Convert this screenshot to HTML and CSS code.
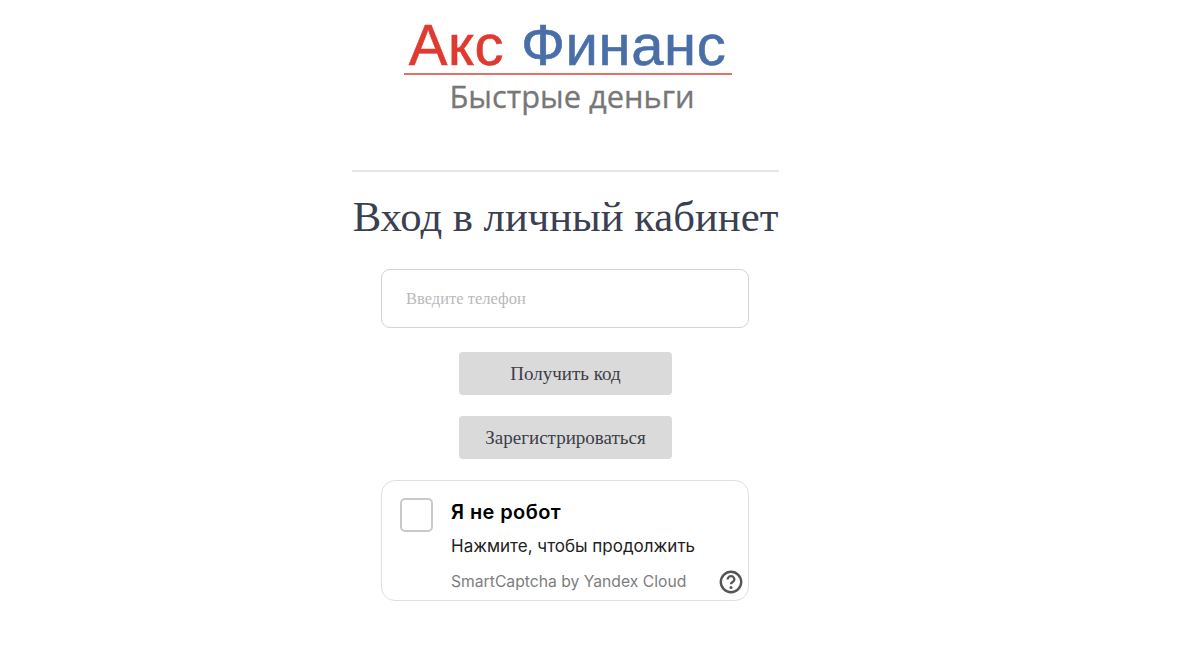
FILE: index.html
```html
<!DOCTYPE html>
<html lang="ru">
<head>
<meta charset="utf-8">
<title>Вход в личный кабинет</title>
<link rel="stylesheet" href="styles.css">
</head>
<body>
<main class="page">
  <div class="logo">
    <div class="logo-name"><span class="red">Акс</span> <span class="blue">Финанс</span></div>
    <div class="logo-line"></div>
    <div class="logo-sub">Быстрые деньги</div>
  </div>
  <section class="panel">
    <h1 class="title">Вход в личный кабинет</h1>
    <form class="form">
      <input class="phone" type="text" placeholder="Введите телефон">
      <button class="btn" type="button">Получить код</button>
      <button class="btn" type="button">Зарегистрироваться</button>
      <div class="captcha">
        <span class="check"></span>
        <div class="captcha-body">
          <div class="captcha-title">Я не робот</div>
          <div class="captcha-text">Нажмите, чтобы продолжить</div>
          <div class="captcha-foot">
            <span>SmartCaptcha by Yandex Cloud</span>
            <svg class="help" viewBox="0 0 24 24" width="24" height="24" aria-hidden="true">
              <circle cx="12" cy="12" r="10.2" fill="none" stroke="#555" stroke-width="2.4"/>
              <path d="M8.6 9.6a3.4 3.4 0 0 1 6.8 0c0 2.3-3.4 2.5-3.4 4.6" fill="none" stroke="#555" stroke-width="2.3"/>
              <circle cx="12" cy="17.4" r="1.5" fill="#555"/>
            </svg>
          </div>
        </div>
      </div>
    </form>
  </section>
</main>
</body>
</html>
```

FILE: styles.css
```css
* { box-sizing: border-box; }
html, body { margin: 0; padding: 0; background: #fff; }
body { height: 668px; overflow: hidden; }
.page { display: flex; flex-direction: column; align-items: center; width: 427px; margin-left: 352px; }
.logo { display: flex; flex-direction: column; align-items: center; width: 328px; height: 170px; margin-left: 4px; padding-top: 16px; }
.logo-name { font-family: "Liberation Sans", sans-serif; font-size: 58px; line-height: 57px; letter-spacing: 0.6px; white-space: nowrap; -webkit-text-stroke: 0.6px currentColor; }
.red { color: #e03a30; }
.blue { color: #4a6fa8; }
.logo-line { width: 328px; height: 2px; background: #e2716a; }
.logo-sub { font-family: "Open Sans", sans-serif; font-size: 30.8px; line-height: 40px; color: #777; margin-left: 9px; margin-top: 1px; white-space: nowrap; -webkit-text-stroke: 0.3px currentColor; }
.panel { width: 427px; border-top: 2px solid #e6e6e6; display: flex; flex-direction: column; align-items: center; }
.title { margin: 21px 0 0; font-family: "Liberation Serif", serif; font-weight: 400; font-size: 42.7px; line-height: 48px; color: #3a3f52; white-space: nowrap; }
.form { display: flex; flex-direction: column; align-items: center; width: 368px; margin-top: 28px; margin-right: 1px; }
.phone { width: 368px; height: 59px; border: 1.5px solid #d4d4d6; border-radius: 9px; padding: 0 24px; font-family: "Liberation Serif", serif; font-size: 16.5px; background: #fff; outline: none; }
.phone::placeholder { color: #b9b9b9; opacity: 1; }
.btn { width: 213px; height: 43px; margin: 24px 0 0 1px; border: 0; border-radius: 4px; background: #dadada; color: #3d4048; font-family: "Liberation Serif", serif; font-size: 19px; padding: 0; }
.btn + .btn { margin-top: 21px; }
.captcha { display: flex; width: 368px; height: 121px; margin-top: 21px; border: 1px solid #dfdfdf; border-radius: 14px; padding: 17px 16px 0 18px; }
.check { flex: none; width: 33px; height: 34px; border: 2.5px solid #c9c9c9; border-radius: 5px; }
.captcha-body { flex: 1; margin-left: 18px; font-family: "Inter", "Noto Sans", sans-serif; }
.captcha-title { font-size: 20px; font-weight: 600; line-height: 29px; letter-spacing: 0.4px; color: #000; }
.captcha-text { font-size: 17px; line-height: 24px; margin-top: 7px; color: #222; }
.captcha-foot { display: flex; justify-content: space-between; align-items: center; margin-top: 12px; font-size: 15.7px; line-height: 24px; color: #7d7d7d; margin-right: -11px; }
.help { flex: none; }
```
